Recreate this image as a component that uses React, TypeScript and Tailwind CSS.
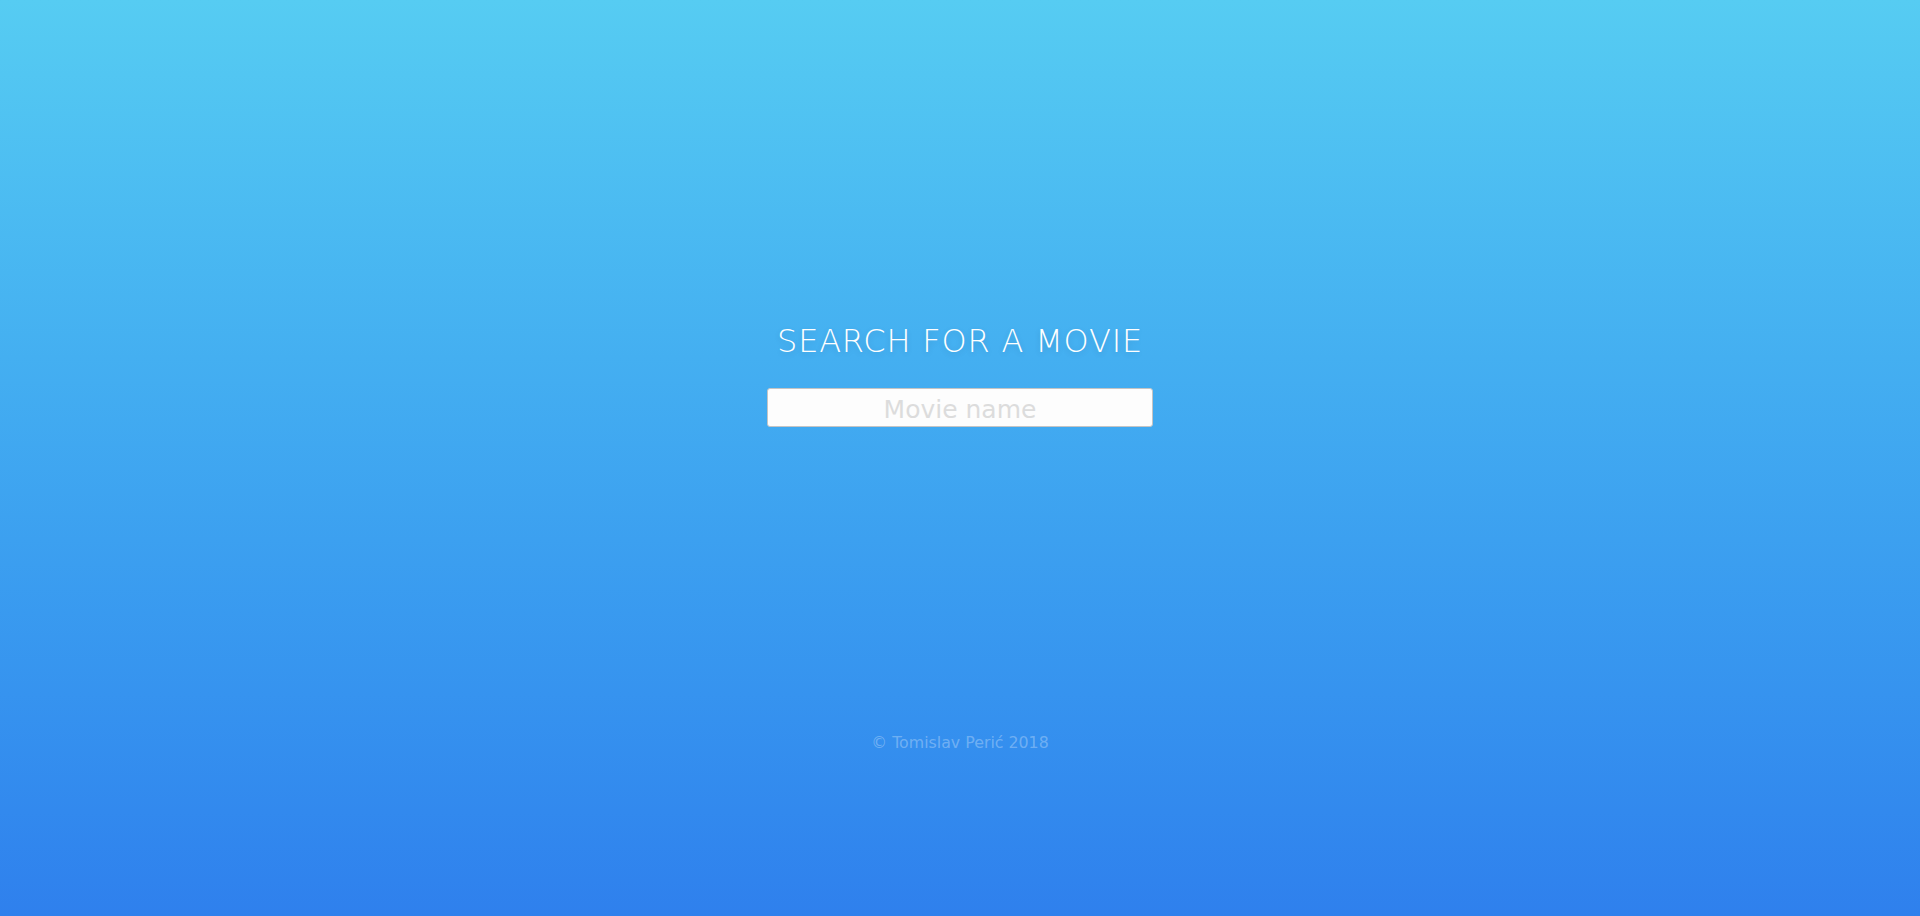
import React from "react";

export default function App() {
  return (
    <div className="w-full h-[916px] flex flex-col items-center bg-gradient-to-b from-[#56CCF2] to-[#2F80ED] font-['DejaVu_Sans',sans-serif]">
      <h1 className="mt-[322px] text-[32px] leading-[38px] font-extralight text-white tracking-[0.8px] [text-shadow:0_2px_6px_rgba(0,0,0,0.12)]">
        SEARCH FOR A MOVIE
      </h1>
      <input
        type="text"
        placeholder="Movie name"
        className="mt-[28px] w-[386px] h-[39px] pt-[3px] bg-[#fdfdfd] border border-[#c4c4c4] rounded-[3px] text-center text-[25px] leading-[34px] text-gray-700 placeholder:text-[#dcdcdc] outline-none font-['DejaVu_Sans',sans-serif]"
      />
      <p className="mt-[307px] text-[15.8px] leading-[18px] text-white/30">
        © Tomislav Perić 2018
      </p>
    </div>
  );
}
